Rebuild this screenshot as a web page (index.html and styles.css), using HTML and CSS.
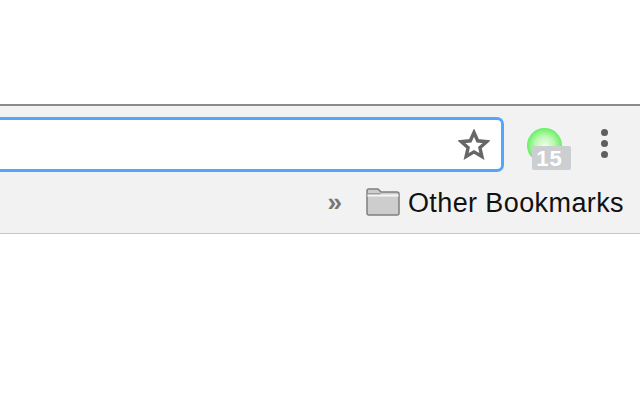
FILE: index.html
```html
<!DOCTYPE html>
<html lang="en">
<head>
    <meta charset="UTF-8">
    <title>Browser toolbar</title>
    <link rel="stylesheet" href="styles.css">
</head>
<body>
    <div class="toolbar">
        <div class="top-row">
            <div class="omnibox">
                <svg class="star" width="32" height="32" viewBox="0 0 32 32">
                    <path d="M16 3.500l3.700 8.300 9 .9-6.800 6 2 8.800-7.900-4.600-7.900 4.600 2-8.800-6.800-6 9-.9z" fill="none" stroke="#666" stroke-width="3.400" stroke-linejoin="miter"/>
                </svg>
            </div>
            <div class="extension">
                <div class="ball"></div>
                <span class="badge">15</span>
            </div>
            <div class="menu-dots">
                <span class="dot"></span>
                <span class="dot"></span>
                <span class="dot"></span>
            </div>
        </div>
        <div class="bookmarks">
            <span class="more">»</span>
            <svg class="folder" width="34" height="28" viewBox="0 0 34 28">
                <path d="M1 25V3q0-2 2-2h9l3 3h16q2 0 2 2v19q0 2-2 2H3q-2 0-2-2z" fill="#cdcdcd" stroke="#7f7f7f" stroke-width="1.500"/>
                <path d="M1.500 7.500h31" stroke="#f6f6f6" stroke-width="2"/>
                <path d="M1.500 5.800h13" stroke="#8c8c8c" stroke-width="1"/>
            </svg>
            <span class="bookmark-name">Other Bookmarks</span>
        </div>
    </div>
</body>
</html>
```

FILE: styles.css
```css
body {
    margin: 0;
    padding-top: 104px;
    background-color: #fff;
    font-family: "Liberation Sans", Arial, sans-serif;
    overflow: hidden;
}
.toolbar {
    height: 127px;
    background-color: #f2f2f2;
    border-top: 2px solid #8a8a8a;
    border-bottom: 1px solid #c8c8c8;
}
.top-row {
    display: flex;
    align-items: flex-start;
    padding-top: 11px;
}
.omnibox {
    box-sizing: border-box;
    width: 514px;
    height: 55px;
    margin-left: -10px;
    padding-right: 11px;
    display: flex;
    align-items: center;
    justify-content: flex-end;
    background-color: #fff;
    border: 3px solid #55a5fb;
    border-radius: 7px;
}
.extension {
    position: relative;
    width: 44px;
    height: 44px;
    margin: 11px 0 0 23px;
}
.ball {
    width: 35px;
    height: 35px;
    border-radius: 50%;
    background: radial-gradient(circle at 50% 50%, #f2fdf0 0%, #b8f9ac 40%, #5cee5c 75%, #2fe23c 100%);
}
.badge {
    position: absolute;
    left: 5px;
    top: 18px;
    box-sizing: border-box;
    width: 39px;
    height: 24px;
    padding-right: 4px;
    border-radius: 2px;
    background-color: #cbcfd2;
    color: #fff;
    font-size: 22px;
    font-weight: bold;
    letter-spacing: 1px;
    line-height: 25px;
    text-align: center;
}
.menu-dots {
    display: flex;
    flex-direction: column;
    gap: 4px;
    margin: 12px 0 0 30px;
}
.dot {
    width: 7px;
    height: 7px;
    border-radius: 50%;
    background-color: #5f5f5f;
}
.bookmarks {
    display: flex;
    align-items: center;
    justify-content: flex-end;
    height: 28px;
    margin-top: 16px;
    padding-right: 16px;
}
.more {
    margin-right: 24px;
    color: #777;
    font-size: 26px;
    font-weight: bold;
    line-height: 28px;
}
.folder {
    margin-right: 8px;
}
.bookmark-name {
    margin-top: 2px;
    color: #111;
    font-size: 27px;
    letter-spacing: 0.400px;
}
```
